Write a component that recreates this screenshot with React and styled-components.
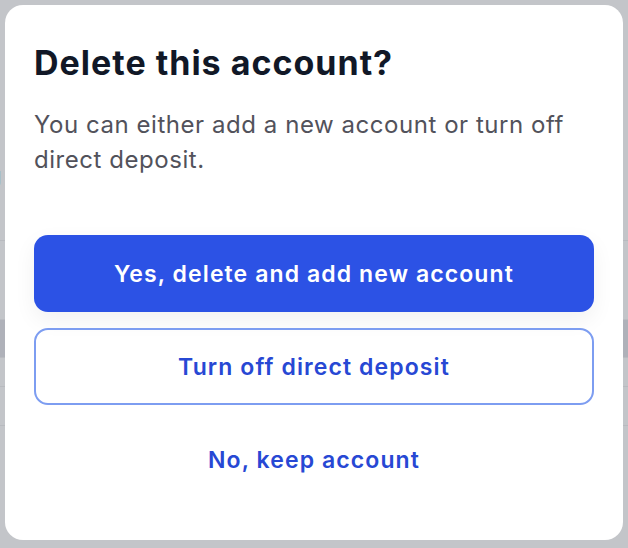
import React from "react";
import styled, { createGlobalStyle } from "styled-components";

const GlobalStyle = createGlobalStyle`
  html, body {
    margin: 0;
    padding: 0;
  }
  body {
    font-family: Inter, "Noto Sans", "Liberation Sans", sans-serif;
    -webkit-font-smoothing: antialiased;
  }
`;

const Page = styled.div`
  position: relative;
  width: 628px;
  height: 548px;
  overflow: hidden;
  background: #ffffff;
`;

const PageContent = styled.div`
  display: flex;
  flex-direction: column;
  padding-top: 160px;
`;

const PageText = styled.div`
  display: flex;
  justify-content: space-between;
  margin: 0 -14px 0 -12px;
  font-size: 22px;
  line-height: 30px;
  color: #3f3f46;
`;

const PageRow = styled.div`
  height: ${({ $h }) => $h}px;
  background: ${({ $shade }) => ($shade ? "#e4e5ea" : "#ffffff")};
  border-bottom: 1px solid ${({ $line }) => $line || "#f0f0f2"};
`;

const Backdrop = styled.div`
  position: absolute;
  inset: 0;
  background: rgba(17, 24, 39, 0.25);
`;

const Dialog = styled.div`
  position: absolute;
  top: 5px;
  left: 5px;
  width: 618px;
  height: 535px;
  box-sizing: border-box;
  padding: 38px 29px 0;
  background: #ffffff;
  border-radius: 18px;
  display: flex;
  flex-direction: column;
`;

const Title = styled.h2`
  margin: 0;
  font-size: 34px;
  line-height: 40px;
  font-weight: 700;
  letter-spacing: 1px;
  color: #111827;
`;

const Description = styled.p`
  margin: 24px 0 0;
  font-size: 24px;
  line-height: 35px;
  font-weight: 400;
  letter-spacing: 0.55px;
  color: #52525b;
`;

const Actions = styled.div`
  display: flex;
  flex-direction: column;
  gap: 16px;
  margin-top: 58px;
`;

const Button = styled.button`
  height: 77px;
  width: 100%;
  box-sizing: border-box;
  border-radius: 14px;
  font-family: inherit;
  font-size: 23px;
  font-weight: 600;
  letter-spacing: 1.1px;
  cursor: pointer;
  border: ${({ $variant }) =>
    $variant === "outline" ? "2px solid #7d9df1" : "none"};
  background: ${({ $variant }) =>
    $variant === "primary" ? "#2c52e5" : "transparent"};
  color: ${({ $variant }) => ($variant === "primary" ? "#ffffff" : "#2748d4")};
  box-shadow: ${({ $variant }) =>
    $variant === "primary" ? "0 8px 22px rgba(15, 23, 42, 0.06)" : "none"};
`;

export default function App() {
  return (
    <>
      <GlobalStyle />
      <Page>
        <PageContent>
          <PageText>
            <span>g</span>
            <span>e</span>
          </PageText>
          <PageRow $h={50} />
          <PageRow $h={78} $line="#f3f3f5" />
          <PageRow $h={37} $shade />
          <PageRow $h={28} />
          <PageRow $h={38} />
        </PageContent>
        <Backdrop />
        <Dialog role="dialog" aria-modal="true">
          <Title>Delete this account?</Title>
          <Description>
            You can either add a new account or turn off direct deposit.
          </Description>
          <Actions>
            <Button $variant="primary">Yes, delete and add new account</Button>
            <Button $variant="outline">Turn off direct deposit</Button>
            <Button $variant="ghost">No, keep account</Button>
          </Actions>
        </Dialog>
      </Page>
    </>
  );
}
